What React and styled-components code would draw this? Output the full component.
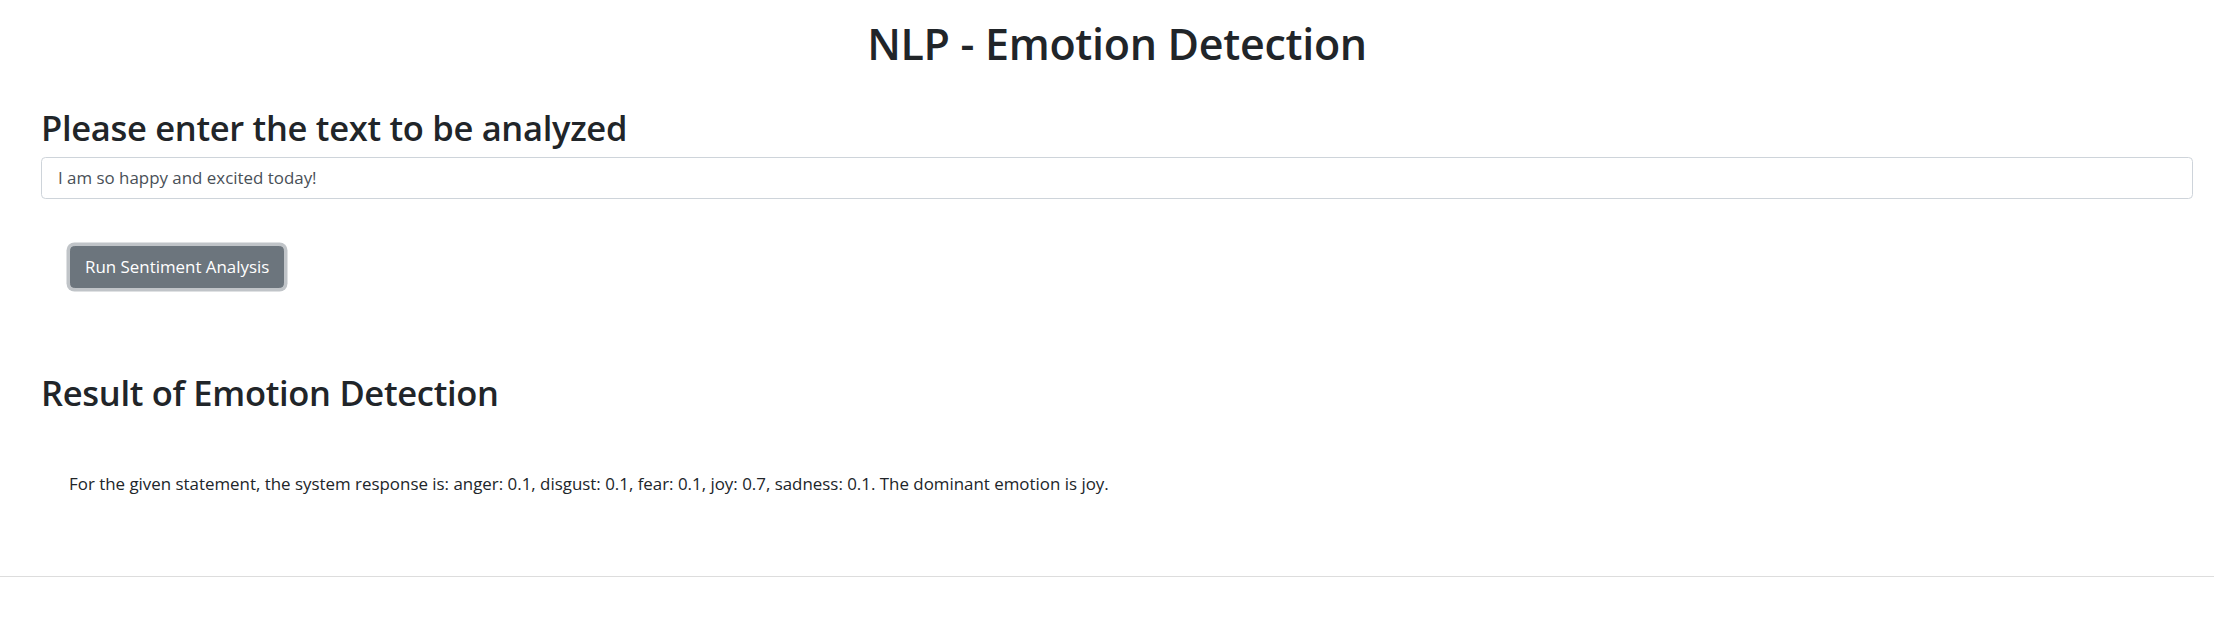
import React from "react";
import styled, { createGlobalStyle } from "styled-components";

const GlobalStyle = createGlobalStyle`
  html, body {
    margin: 0;
    padding: 0;
    background: #ffffff;
  }
  body {
    font-family: "Open Sans", "Noto Sans", "Liberation Sans", sans-serif;
    color: #212529;
    font-size: 16.9px;
    line-height: 1.5;
  }
`;

const Page = styled.div`
  padding: 0 21px 0 41px;
`;

const Title = styled.h1`
  margin: 18px 0 0;
  font-size: 43px;
  font-weight: 600;
  letter-spacing: -0.3px;
  line-height: 1.2;
  text-align: center;
`;

const Heading = styled.h2`
  margin: ${props => props.$top}px 0 0;
  font-size: 34.5px;
  font-weight: 600;
  letter-spacing: -0.3px;
  line-height: 1.2;
`;

const TextInput = styled.input`
  display: block;
  box-sizing: border-box;
  width: 100%;
  height: 42px;
  margin-top: 9px;
  padding: 6.6px 16px;
  font-family: inherit;
  font-size: 16.9px;
  color: #495057;
  background: #ffffff;
  border: 1px solid #ced4da;
  border-radius: 4.4px;
  outline: none;
`;

const Actions = styled.div`
  padding: 47px 0 0 29px;
`;

const Button = styled.button`
  height: 42px;
  padding: 6.6px 14px;
  font-family: inherit;
  font-size: 16.9px;
  line-height: 1.5;
  color: #ffffff;
  background: #6c757d;
  border: 1px solid #6c757d;
  border-radius: 4.4px;
  box-shadow: 0 0 0 3.5px rgba(130, 138, 145, 0.5);
  cursor: pointer;
`;

const Result = styled.p`
  margin: 58px 0 0;
  padding-left: 28px;
`;

const Rule = styled.hr`
  margin: 79px 0 0;
  border: 0;
  border-top: 1px solid #dddddd;
`;

export default function App() {
  return (
    <>
      <GlobalStyle />
      <Page>
        <Title>NLP - Emotion Detection</Title>
        <Heading $top={37}>Please enter the text to be analyzed</Heading>
        <TextInput
          type="text"
          defaultValue="I am so happy and excited today!"
        />
        <Actions>
          <Button type="button">Run Sentiment Analysis</Button>
        </Actions>
        <Heading $top={84}>Result of Emotion Detection</Heading>
        <Result>
          For the given statement, the system response is: anger: 0.1,
          disgust: 0.1, fear: 0.1, joy: 0.7, sadness: 0.1. The dominant
          emotion is joy.
        </Result>
      </Page>
      <Rule />
    </>
  );
}
